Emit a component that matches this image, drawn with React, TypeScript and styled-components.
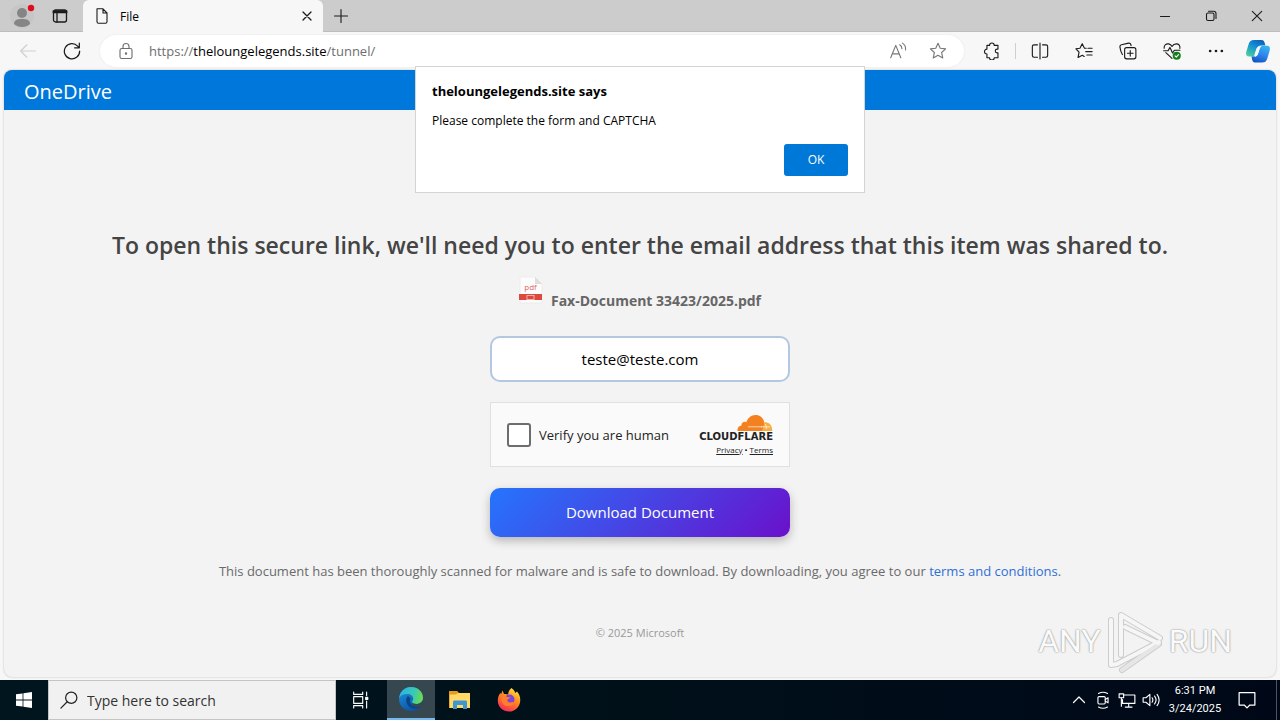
import React from "react";
import styled, { createGlobalStyle } from "styled-components";

const GlobalStyle = createGlobalStyle`
  *, *::before, *::after { box-sizing: border-box; }
  body {
    margin: 0;
    font-family: "Open Sans", "Noto Sans", sans-serif;
    font-size: 13px;
    color: #000;
    background: #f7f7f7;
  }
  button, input { font: inherit; color: inherit; }
  h1, p { margin: 0; }
`;

const Desktop = styled.div`
  display: flex;
  flex-direction: column;
  min-height: 100vh;
`;

const Browser = styled.div`
  position: relative;
  flex: 1;
  display: flex;
  flex-direction: column;
`;

const TabStrip = styled.header`
  display: flex;
  height: 32px;
  background: #cccccc;
  border-bottom: 1px solid #bdbdbd;
`;

const StripLead = styled.div`
  display: flex;
  align-items: center;
  gap: 4px;
  width: 83px;
  padding-left: 2px;
`;

const BareButton = styled.button<{ $w?: number }>`
  display: flex;
  align-items: center;
  justify-content: center;
  flex: none;
  width: ${(p) => p.$w ?? 44}px;
  height: 100%;
  padding: 0;
  border: 0;
  background: none;
`;

const Tab = styled.div`
  display: flex;
  align-items: center;
  width: 240px;
  height: 32px;
  padding-left: 11px;
  gap: 10px;
  background: #f7f7f7;
  border-radius: 6px 6px 0 0;
  font-size: 12px;
`;

const TabTitle = styled.span`
  flex: 1;
`;

const WindowButtons = styled.div`
  display: flex;
  margin-left: auto;
`;

const Toolbar = styled.nav`
  display: flex;
  align-items: center;
  height: 38px;
  padding: 0 2px 0 6px;
`;

const AddressBar = styled.div`
  display: flex;
  align-items: center;
  flex: 1;
  height: 32px;
  margin: 0 6px;
  padding: 0 6px 0 16px;
  border-radius: 16px;
  background: #fff;
  box-shadow: 0 0 2px #e2e2e2;
`;

const Url = styled.span`
  flex: 1;
  margin-left: 13px;
  font-size: 13px;
  color: #6e6e6e;

  b {
    font-weight: 400;
    color: #000;
  }
`;

const Separator = styled.span`
  width: 1px;
  height: 16px;
  margin: 0 2px 0 1px;
  background: #cfcfcf;
`;

const Page = styled.main`
  position: relative;
  flex: 1;
  display: flex;
  flex-direction: column;
  margin: 0 4px 3px;
  border-radius: 8px;
  overflow: hidden;
  background: #f3f3f3;
  box-shadow: 0 0 2px #b4b4b4;
`;

const Brand = styled.div`
  height: 40px;
  padding: 0 20px;
  background: #0078db;
  color: #fff;
  font-size: 20px;
  line-height: 44px;
`;

const Content = styled.form`
  display: flex;
  flex-direction: column;
  align-items: center;
  padding: 119px 16px 20px;
  text-align: center;
`;

const Title = styled.h1`
  font-size: 23px;
  font-weight: 600;
  line-height: 32px;
  color: #444;
`;

const FileRow = styled.div`
  display: flex;
  align-items: flex-start;
  gap: 8px;
  height: 60px;
  padding-top: 15px;
`;

const FileName = styled.span`
  padding-top: 15px;
  font-size: 14px;
  font-weight: 700;
  line-height: 20px;
  color: #666;
`;

const EmailInput = styled.input`
  width: 300px;
  height: 46px;
  margin-top: 15px;
  padding: 0 12px;
  border: 2px solid #b4c7e0;
  border-radius: 10px;
  background: #fff;
  font-size: 15px;
  text-align: center;
`;

const Captcha = styled.div`
  display: flex;
  align-items: center;
  width: 300px;
  height: 65px;
  margin-top: 20px;
  padding: 0 16px;
  border: 1px solid #e0e0e0;
  background: #fafafa;
`;

const CaptchaLabel = styled.label`
  display: flex;
  align-items: center;
  flex: 1;
  gap: 8px;
  font-size: 13px;
  color: #232323;
`;

const Tick = styled.input`
  appearance: none;
  width: 24px;
  height: 24px;
  margin: 0;
  border: 2px solid #6d6d6d;
  border-radius: 3px;
  background: #fff;
`;

const CaptchaBrand = styled.div`
  display: flex;
  flex-direction: column;
  align-items: flex-end;
`;

const CloudName = styled.span`
  font-family: "DejaVu Sans", sans-serif;
  font-size: 10px;
  font-weight: 700;
  line-height: 10px;
  color: #222;
`;

const CaptchaLinks = styled.span`
  display: flex;
  gap: 2px;
  margin-top: 2px;
  font-size: 8px;
  line-height: 12px;

  a { color: #232323; }
`;

const Download = styled.button`
  width: 300px;
  height: 49px;
  margin-top: 21px;
  padding: 0 0 2px;
  border: 0;
  border-radius: 10px;
  background: linear-gradient(135deg, #2575fc, #6a11cb);
  box-shadow: 0 4px 10px rgba(0, 0, 0, 0.25);
  color: #fff;
  font-size: 15px;
`;

const Terms = styled.p`
  margin-top: 24px;
  font-size: 13px;
  line-height: 20px;
  color: #6a6a6a;

  a {
    color: #2f6fd6;
    text-decoration: none;
  }
`;

const Copyright = styled.p`
  margin-top: 44px;
  font-size: 11px;
  line-height: 16px;
  color: #999;
`;

const Watermark = styled.div`
  position: absolute;
  right: 44px;
  bottom: 2px;
  display: flex;
  align-items: center;
  gap: 2px;
  font-family: Roboto, sans-serif;
  font-size: 32px;
  line-height: 68px;
  color: #fafafa;
  text-shadow: 0 0 2px #8c8c8c, 0 0 1px #b4b4b4;
`;

const Dialog = styled.section`
  position: absolute;
  top: 66px;
  left: 50%;
  width: 450px;
  transform: translateX(-50%);
  display: flex;
  flex-direction: column;
  padding: 15px 16px 16px;
  border: 1px solid #d4d4d4;
  background: #fff;
  font-size: 12px;
  line-height: 18px;
`;

const DialogTitle = styled.strong`
  font-size: 13px;
`;

const DialogText = styled.p`
  margin-top: 12px;
`;

const OkButton = styled.button`
  align-self: flex-end;
  width: 64px;
  height: 32px;
  margin-top: 14px;
  padding: 0;
  border: 0;
  border-radius: 3px;
  background: #0078d7;
  color: #fff;
`;

const Taskbar = styled.footer`
  display: flex;
  height: 40px;
  background: linear-gradient(90deg, #00151e, #001019 50%, #000818);
  color: #fff;
`;

const SearchBox = styled.label`
  display: flex;
  align-items: center;
  gap: 9px;
  width: 288px;
  padding: 0 11px;
  border: 1px solid #c4c4c4;
  background: #f1f1f1;
`;

const SearchInput = styled.input`
  flex: 1;
  min-width: 0;
  padding: 0;
  border: 0;
  outline: 0;
  background: none;
  color: #000;
  font-size: 14px;

  &::placeholder { color: #333; opacity: 1; }
`;

const AppButton = styled(BareButton)<{ $active?: boolean }>`
  margin-left: 1px;
  background: ${(p) => (p.$active ? "#37474f" : "none")};
  border-bottom: ${(p) => (p.$active ? "2px solid #76b9ed" : "0")};
`;

const Tray = styled.div`
  display: flex;
  margin-left: auto;
  padding-right: 3px;
`;

const Clock = styled.time`
  display: flex;
  flex-direction: column;
  justify-content: center;
  width: 64px;
  font-family: Roboto, sans-serif;
  font-size: 11px;
  line-height: 18px;
  text-align: center;
`;

const DesktopEdge = styled.span`
  width: 10px;
  border-right: 1px solid #4c5563;
`;

type StrokeProps = {
  size?: number;
  color?: string;
  width?: number;
  children: React.ReactNode;
};

const Stroke = ({ size = 16, color = "#1b1b1b", width = 1.1, children }: StrokeProps) => (
  <svg
    width={size}
    height={size}
    viewBox="0 0 16 16"
    fill="none"
    stroke={color}
    strokeWidth={width}
    strokeLinecap="round"
    strokeLinejoin="round"
    aria-hidden="true"
  >
    {children}
  </svg>
);

const ProfileIcon = () => (
  <svg width="28" height="28" viewBox="0 0 28 28" aria-hidden="true">
    <circle cx="14" cy="14" r="12" fill="#c6c6c6" />
    <circle cx="14" cy="11" r="5" fill="#858585" />
    <path d="M6 22c0-4 3-5 8-5s8 1 8 5c-2 2-5 3-8 3s-6-1-8-3z" fill="#858585" />
    <circle cx="23" cy="6" r="3.2" fill="#e00b1c" />
  </svg>
);

const CopilotIcon = () => (
  <svg width="26" height="26" viewBox="0 0 26 26" aria-hidden="true">
    <defs>
      <linearGradient id="copA" x1="0.8" y1="0" x2="0.2" y2="1">
        <stop offset="0" stopColor="#0b5fbd" />
        <stop offset="0.45" stopColor="#1590d4" />
        <stop offset="1" stopColor="#48cf9d" />
      </linearGradient>
      <linearGradient id="copB" x1="0.7" y1="0" x2="0.3" y2="1">
        <stop offset="0" stopColor="#35b4f0" />
        <stop offset="0.5" stopColor="#2f86ee" />
        <stop offset="1" stopColor="#0f55c0" />
      </linearGradient>
    </defs>
    <path d="M9 2h7.500c2 0 2.600 1 3.200 3l.7 2.500h-3c-2 0-3 1-3.600 2.800L12 16.600c-.5 1.300-1.200 1.900-2.500 1.900H4.200c-2.700 0-3.700-2-2.900-4.800l2.400-7.600C4.600 3.200 6 2 9 2z" fill="url(#copA)" />
    <path d="M17 24.500h-7c-1.800 0-2.400-1-2.900-3L6.500 18.600h3c1.900 0 3-.9 3.500-2.600l2-6.300c.5-1.300 1.200-2 2.500-2H22c2.600 0 3.500 2 2.700 4.800l-2.400 7.900c-.9 2.900-2.300 4.100-5.300 4.100z" fill="url(#copB)" />
    <path d="M16.200 8.200c-1.200.6-1.800 1.300-2.200 2.600l-1.700 5.500c-.3.900-.8 1.400-1.700 1.800-.7.200-1-.3-.8-1l2-6.200c.6-1.900 2-3 4.400-2.700z" fill="#f4fbff" stroke="#f4fbff" strokeWidth="1" />
  </svg>
);

const PdfIcon = () => (
  <svg width="24" height="29" viewBox="0 0 24 29" aria-hidden="true">
    <path d="M1 1h15l7 7v19H1z" fill="#fcfcfc" stroke="#ececec" />
    <path d="M16 1l7 7h-7z" fill="#dedede" />
    <text x="11.500" y="14" textAnchor="middle" fontSize="8" fontFamily="Open Sans, sans-serif" fill="#e0645c">pdf</text>
    <rect x="0" y="18" width="23" height="6" fill="#db4a3c" />
    <rect x="8" y="19.500" width="7" height="4" fill="none" stroke="#f3b0a8" />
  </svg>
);

const CloudIcon = () => (
  <svg width="36" height="18" viewBox="0 0 36 18" aria-hidden="true">
    <path d="M27 17H.6C0 13.600 2 11.600 4.500 11.400 4.200 8.700 7 7 9.300 8.300 10.700 3.800 14.500 1 18.500 1c4.700 0 7.900 3 8.700 7.200l.6 3.800z" fill="#f4811f" />
    <path d="M27.500 8.200c4.700-.6 8 3 7.700 8.800H25l1.200-3.800z" fill="#faad3f" />
    <path d="M11 12.800h14M24 12.800h9M28.500 10l1 5" stroke="#fff" strokeWidth="0.800" opacity="0.850" />
  </svg>
);

const PlayMark = () => (
  <svg width="64" height="68" viewBox="0 0 64 68" fill="none" strokeLinejoin="round" strokeLinecap="round" aria-hidden="true">
    <g stroke="#cdcdcd" strokeWidth="6">
      <path d="M8 13v45l6-1 42-22M18 48V8l39 23M22 20l33 16M19 63l37-26" />
    </g>
    <g stroke="#f6f6f6" strokeWidth="4">
      <path d="M8 13v45l6-1 42-22" />
      <path d="M19 63l37-26" stroke="#e6e6e6" />
      <path d="M18 48V8l39 23M22 20l33 16" />
    </g>
  </svg>
);

const StartIcon = () => (
  <svg width="16" height="16" viewBox="0 0 16 16" fill="#fff" aria-hidden="true">
    <path d="M0 2.300l6.600-.9v6.200H0zM7.400 1.300L16 0v7.600H7.400zM0 8.400h6.600v6.200L0 13.700zM7.400 8.400H16V16l-8.600-1.300z" />
  </svg>
);

const EdgeIcon = () => (
  <svg width="26" height="26" viewBox="0 0 26 26" aria-hidden="true">
    <defs>
      <linearGradient id="edgeTop" x1="0" y1="0.300" x2="1" y2="0.500">
        <stop offset="0" stopColor="#2bb3e6" />
        <stop offset="0.600" stopColor="#38c9b5" />
        <stop offset="1" stopColor="#6ddb4c" />
      </linearGradient>
      <linearGradient id="edgeLow" x1="0" y1="0" x2="0.500" y2="1">
        <stop offset="0" stopColor="#1f95e0" />
        <stop offset="1" stopColor="#0b56a8" />
      </linearGradient>
    </defs>
    <circle cx="13" cy="13" r="12" fill="url(#edgeLow)" />
    <path d="M1.200 12C2 5.500 7 1 13 1c7 0 12 5 12 10.500 0 4-3 6.500-6.500 6.500-3 0-4.500-1-4.500-2 0-.8 1.200-1.300 1.200-3.300C15.200 10 12.600 8 9.200 8 5.500 8 2.500 9.600 1.200 12z" fill="url(#edgeTop)" />
    <path d="M10 10c-2 2-2.500 5.500-.5 8.700 1.800 2.800 5.500 4.500 9 4 2-.3 3.700-1.700 4.500-2.900-2.500 1.200-6.500 1.100-9-.8-2.300-1.800-2.700-4.500-1.400-6.500z" fill="#0d4584" />
    <path d="M14 16c0 1 1.500 2 4.500 2 2.300 0 4.500-1 6.700-3.500l.8 3.500-2.700 2c-2.700 1.200-6.800.9-9.100-1z" fill="#37474f" />
  </svg>
);

const FolderIcon = () => (
  <svg width="22" height="20" viewBox="0 0 22 20" aria-hidden="true">
    <path d="M0 1h8l2 2h11v15H0z" fill="#f0a92b" />
    <path d="M1 3h20v15H1z" fill="#ffd867" />
    <path d="M0 1h8l1 2-2 1.500H0z" fill="#e69a1f" />
    <path d="M4 19v-7c0-1 .6-1.500 2-1.500h10c1.400 0 2 .5 2 1.500v7h-4v-4H8v4z" fill="#3f95d0" />
  </svg>
);

const FirefoxIcon = () => (
  <svg width="24" height="24" viewBox="0 0 24 24" aria-hidden="true">
    <defs>
      <linearGradient id="fox" x1="0.800" y1="0" x2="0.300" y2="1">
        <stop offset="0" stopColor="#ffe93f" />
        <stop offset="0.450" stopColor="#ff8a1f" />
        <stop offset="1" stopColor="#f5285a" />
      </linearGradient>
    </defs>
    <path d="M14.500 0c2 1.500 3.200 3 3.700 5L20 3.600c2.500 2.900 3.500 5.900 3.200 9.400-.4 6-5.200 10.600-11.200 10.600S.8 19 .8 12.800c0-3.300 1-5.800 2.600-8L4 6.500 5.500 2.500l1.500 3.500c1.500-.3 3.200 0 4.200.6C11 4 12.500 1.600 14.500 0z" fill="url(#fox)" />
    <circle cx="12.500" cy="11.500" r="5" fill="#7f45d6" />
    <path d="M4.500 9c2-1.500 4.500-1.300 6 .2h3c-.4 1.400-2 1.600-3 2.200-.5 1 0 2.600 2 3 1.800.3 3-.7 4.800-.3-1 3-3.500 4-6.200 4-4.200 0-7.400-3.600-6.600-9.100z" fill="#ff7e2c" />
  </svg>
);

export default function App() {
  return (
    <Desktop>
      <GlobalStyle />
      <Browser>
        <TabStrip>
          <StripLead>
            <BareButton $w={40} aria-label="Profile"><ProfileIcon /></BareButton>
            <BareButton $w={28} aria-label="Tab actions">
              <Stroke size={16} width={1.3}>
                <rect x="1.500" y="2" width="13" height="12" rx="2" />
                <path d="M1.500 4.200h13M1.500 3.200h13" strokeWidth="2" />
                <path d="M5 5v9" />
              </Stroke>
            </BareButton>
          </StripLead>
          <Tab>
            <Stroke size={16}>
              <path d="M3 .8h6L13 5v8.700c0 .9-.6 1.500-1.500 1.500h-7C3.600 15.200 3 14.600 3 13.700zM9 .8V5h4" />
            </Stroke>
            <TabTitle>File</TabTitle>
            <BareButton $w={32} aria-label="Close tab">
              <Stroke size={16} width={1.3}><path d="M4 4l8 8M12 4l-8 8" /></Stroke>
            </BareButton>
          </Tab>
          <BareButton $w={35} aria-label="New tab">
            <Stroke size={16}><path d="M8 1.500v13M1.500 8h13" /></Stroke>
          </BareButton>
          <WindowButtons>
            <BareButton $w={46} aria-label="Minimize">
              <Stroke size={16}><path d="M3.500 8.500h9" /></Stroke>
            </BareButton>
            <BareButton $w={46} aria-label="Restore">
              <Stroke size={16}>
                <rect x="3.500" y="5" width="7.500" height="7.500" rx="1.500" />
                <path d="M5.500 3.200h5c1.500 0 2.500 1 2.500 2.300v5" />
              </Stroke>
            </BareButton>
            <BareButton $w={46} aria-label="Close">
              <Stroke size={16}><path d="M3.300 3.300l9.400 9.400M12.700 3.300l-9.400 9.400" /></Stroke>
            </BareButton>
          </WindowButtons>
        </TabStrip>

        <Toolbar>
          <BareButton aria-label="Back">
            <Stroke size={18} color="#cfcfcf"><path d="M14.500 8h-13M7 2.500L1.500 8 7 13.500" /></Stroke>
          </BareButton>
          <BareButton aria-label="Refresh">
            <Stroke size={18}><path d="M14.800 8.200A6.800 6.800 0 1 1 13 3.600l1.300 1.400M14.500 1v4.200h-4.200" /></Stroke>
          </BareButton>
          <AddressBar>
            <Stroke size={20} color="#6f6f6f" width={0.9}>
              <rect x="3.200" y="6" width="9.600" height="8" rx="1.400" />
              <path d="M5.600 6V4.400C5.600 3 6.600 2 8 2s2.400 1 2.400 2.400V6" />
              <circle cx="8" cy="10" r="0.500" fill="#6f6f6f" />
            </Stroke>
            <Url>https://<b>theloungelegends.site</b>/tunnel/</Url>
            <BareButton $w={40} aria-label="Read aloud">
              <Stroke size={18} color="#777" width={1}>
                <path d="M1.500 14L6 3l4.500 11M3 10.500h6M9.500 2.500c1.500.8 2 2 2 3.500M12 1c2 1.300 3 3.200 2.700 6" />
              </Stroke>
            </BareButton>
            <BareButton $w={40} aria-label="Favorite">
              <Stroke size={18} color="#777" width={1}>
                <path d="M8 1.200l2 4.400 4.800.5-3.600 3.200 1 4.900L8 11.800l-4.200 2.400 1-4.900L1.200 6.100 6 5.600z" />
              </Stroke>
            </BareButton>
          </AddressBar>
          <BareButton aria-label="Extensions">
            <Stroke size={18} width={1}>
              <path d="M3.500 3h2.300a2.100 2.100 0 0 1 4.200 0h3.300v3.300h-.7a1.700 1.700 0 0 0 0 3.400h.7V14H10a2.100 2.100 0 0 1-4.200 0H3.500v-3.300a2.200 2.200 0 0 1 0-4.400z" />
            </Stroke>
          </BareButton>
          <Separator />
          <BareButton aria-label="Split screen">
            <Stroke size={18} width={1}>
              <path d="M5.800 2.500H2.700c-.9 0-1.500.6-1.500 1.500v8c0 .9.600 1.500 1.500 1.500h3.100M10.200 2.500h3.100c.9 0 1.500.6 1.500 1.500v8c0 .9-.6 1.500-1.500 1.500h-3.100M8 1v14" />
            </Stroke>
          </BareButton>
          <BareButton aria-label="Favorites">
            <Stroke size={18} width={1}>
              <path d="M10 5.500H8.400L6.400 1.500l-2 4L.8 6l2.800 3-.9 4.800 3.800-2 1.700 1M11.500 5.500h3.700M9.500 8.500h5.700M10.500 11.500h4.700" />
            </Stroke>
          </BareButton>
          <BareButton aria-label="Collections">
            <Stroke size={18} width={1}>
              <rect x="5" y="5" width="10" height="10" rx="1.800" />
              <path d="M10 7.500v5M7.500 10h5M3 11.200C1.800 9 1 6 .8 4.300c0-1 .4-1.600 1.400-1.800L8.500 1c1-.2 1.700.2 2 1.200l.2 1" />
            </Stroke>
          </BareButton>
          <BareButton aria-label="Browser essentials">
            <Stroke size={18} width={1}>
              <path d="M1 5.500C.8 2.500 3 1.300 5 1.700 6.500 2 7.500 3 8 4c.7-1.200 2-2.300 4-2.300 2 0 3.400 1.600 3 4M.5 7.800h4l1.700-3 2.300 5 1.600-2.500h5M2.500 9.500L8 14.500" />
              <circle cx="12.200" cy="12.200" r="3.600" fill="#13801c" stroke="none" />
              <path d="M10.700 12.400l1.100 1 2-2.200" stroke="#fff" />
            </Stroke>
          </BareButton>
          <BareButton aria-label="Settings and more">
            <Stroke size={18}>
              <g fill="#1b1b1b" stroke="none">
                <circle cx="2.800" cy="8" r="1.200" />
                <circle cx="8" cy="8" r="1.200" />
                <circle cx="13.200" cy="8" r="1.200" />
              </g>
            </Stroke>
          </BareButton>
          <BareButton $w={40} aria-label="Copilot"><CopilotIcon /></BareButton>
        </Toolbar>

        <Page>
          <Brand>OneDrive</Brand>
          <Content onSubmit={(e: React.FormEvent) => e.preventDefault()}>
            <Title>To open this secure link, we'll need you to enter the email address that this item was shared to.</Title>
            <FileRow>
              <PdfIcon />
              <FileName>Fax-Document 33423/2025.pdf</FileName>
            </FileRow>
            <EmailInput type="text" aria-label="Email address" defaultValue="teste@teste.com" />
            <Captcha>
              <CaptchaLabel>
                <Tick type="checkbox" />
                Verify you are human
              </CaptchaLabel>
              <CaptchaBrand>
                <CloudIcon />
                <CloudName>CLOUDFLARE</CloudName>
                <CaptchaLinks>
                  <a href="#privacy">Privacy</a>
                  <span>•</span>
                  <a href="#terms">Terms</a>
                </CaptchaLinks>
              </CaptchaBrand>
            </Captcha>
            <Download type="submit">Download Document</Download>
            <Terms>
              This document has been thoroughly scanned for malware and is safe to download. By downloading, you agree to our{" "}
              <a href="#conditions">terms and conditions</a>.
            </Terms>
            <Copyright>© 2025 Microsoft</Copyright>
          </Content>
          <Watermark>
            <span>ANY</span>
            <PlayMark />
            <span>RUN</span>
          </Watermark>
        </Page>

        <Dialog role="alertdialog" aria-labelledby="dialog-title">
          <DialogTitle id="dialog-title">theloungelegends.site says</DialogTitle>
          <DialogText>Please complete the form and CAPTCHA</DialogText>
          <OkButton type="button">OK</OkButton>
        </Dialog>
      </Browser>

      <Taskbar>
        <BareButton $w={48} aria-label="Start"><StartIcon /></BareButton>
        <SearchBox>
          <Stroke size={18} color="#222"><circle cx="10" cy="6" r="5" /><path d="M6.400 9.600L.8 15.200" /></Stroke>
          <SearchInput type="text" placeholder="Type here to search" aria-label="Search" />
        </SearchBox>
        <BareButton $w={50} aria-label="Task view">
          <Stroke size={18} color="#fff" width={1}>
            <path d="M1.500 1v2h8V1M1.500 15v-2h8v2M1.500 5h8v6h-8zM13 1v3M13 9v6" />
            <rect x="12.200" y="5.500" width="1.800" height="2" fill="#fff" />
          </Stroke>
        </BareButton>
        <AppButton $w={48} $active aria-label="Edge"><EdgeIcon /></AppButton>
        <AppButton $w={48} aria-label="File Explorer"><FolderIcon /></AppButton>
        <AppButton $w={48} aria-label="Firefox"><FirefoxIcon /></AppButton>
        <Tray>
          <BareButton $w={24} aria-label="Show hidden icons">
            <Stroke size={16} color="#fff" width={1.2}><path d="M2.500 10.500L8 5l5.500 5.500" /></Stroke>
          </BareButton>
          <BareButton $w={24} aria-label="Meet now">
            <Stroke size={18} color="#fff" width={1}>
              <rect x="3.500" y="5" width="6.500" height="6.500" rx="1" />
              <path d="M10 7.500l2.500-1.500v4.500L10 9M4 2.200c2.500-1.400 5.500-1.400 8 0M4 14.200c2.500 1.400 5.500 1.400 8 0" />
            </Stroke>
          </BareButton>
          <BareButton $w={24} aria-label="Network">
            <Stroke size={18} color="#fff" width={1}>
              <path d="M5 3.500h10v7.500H4V7.500M9.500 11v3M6.500 14.300h6" />
              <rect x="1" y="2.500" width="4" height="3.500" />
              <path d="M3 6v7.500" />
            </Stroke>
          </BareButton>
          <BareButton $w={24} aria-label="Volume">
            <Stroke size={18} color="#fff" width={1}>
              <path d="M1 6h2.500L7 3v10l-3.500-3H1zM9 6c.8 1.200.8 2.800 0 4M11.200 4.500c1.500 2 1.500 5 0 7M13.400 3c2.200 3 2.200 7 0 10" />
            </Stroke>
          </BareButton>
          <Clock>
            <span>6:31 PM</span>
            <span>3/24/2025</span>
          </Clock>
          <BareButton $w={40} aria-label="Notifications">
            <Stroke size={18} color="#fff" width={1.1}><path d="M1 1.500h14v11h-4.500L8 15l-2.500-2.500H1z" /></Stroke>
          </BareButton>
          <DesktopEdge />
        </Tray>
      </Taskbar>
    </Desktop>
  );
}
